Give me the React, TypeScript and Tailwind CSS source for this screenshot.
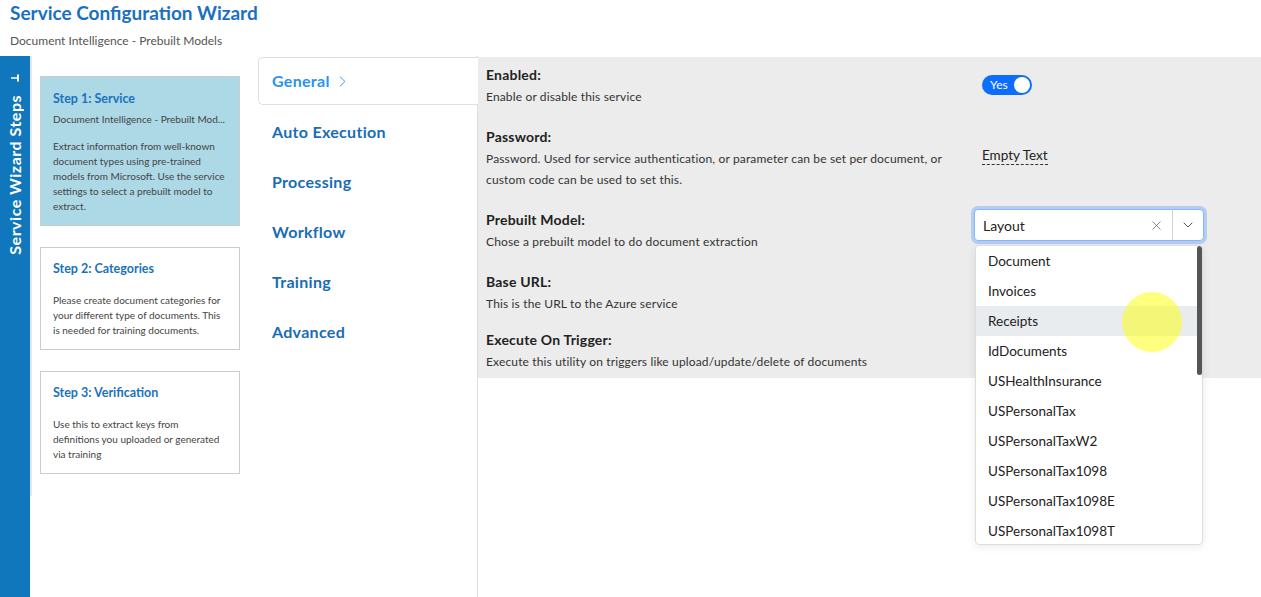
import React from "react";
import { ChevronRight, ChevronDown, X } from "lucide-react";

const steps = [
  {
    title: "Step 1: Service",
    subtitle: "Document Intelligence - Prebuilt Mod...",
    text: "Extract information from well-known document types using pre-trained models from Microsoft. Use the service settings to select a prebuilt model to extract.",
    active: true,
  },
  {
    title: "Step 2: Categories",
    text: "Please create document categories for your different type of documents. This is needed for training documents.",
  },
  {
    title: "Step 3: Verification",
    text: "Use this to extract keys from definitions you uploaded or generated via training",
  },
];

const tabs = ["General", "Auto Execution", "Processing", "Workflow", "Training", "Advanced"];

const models = [
  "Document",
  "Invoices",
  "Receipts",
  "IdDocuments",
  "USHealthInsurance",
  "USPersonalTax",
  "USPersonalTaxW2",
  "USPersonalTax1098",
  "USPersonalTax1098E",
  "USPersonalTax1098T",
];

function StepCard({ step }: { step: (typeof steps)[number] }) {
  return (
    <div
      className={`border border-[#cccccc] px-[12px] ${
        step.active ? "bg-[#add8e6] pt-[14px] pb-[11px]" : "bg-white pt-[13px] pb-[11px]"
      }`}
    >
      <div className="text-[12.5px] font-bold leading-[16px] text-[#1a72bf]">{step.title}</div>
      {step.subtitle && (
        <div className="mt-[4px] text-[10px] leading-[16px] text-[#444] whitespace-nowrap">{step.subtitle}</div>
      )}
      <p className={`${step.subtitle ? "mt-[12px]" : "mt-[16px]"} text-[10px] leading-[15px] text-[#444]`}>
        {step.text}
      </p>
    </div>
  );
}

function Row({
  label,
  desc,
  className,
  children,
}: {
  label: string;
  desc: string;
  className: string;
  children?: React.ReactNode;
}) {
  return (
    <div className={`flex ${className}`}>
      <div className="w-[488px] pr-[28px]">
        <div className="text-[14px] font-bold leading-[22px] tracking-[0.2px] text-[#222]">{label}</div>
        <div className="text-[12px] leading-[21px] tracking-[0.15px] text-[#333]">{desc}</div>
      </div>
      <div className="flex-1">{children}</div>
    </div>
  );
}

export default function App() {
  return (
    <div className="w-[1261px] h-[597px] overflow-hidden bg-white flex flex-col font-['Lato','Liberation_Sans',sans-serif]">
      <header className="h-[56px] shrink-0 pl-[10px] pt-[2px]">
        <h1 className="text-[19px] font-bold leading-[22px] text-[#1a70bf]">Service Configuration Wizard</h1>
        <p className="mt-[9px] text-[12px] leading-[16px] text-[#555]">Document Intelligence - Prebuilt Models</p>
      </header>

      <div className="flex flex-1 min-h-0">
        <aside className="w-[30px] shrink-0 bg-[#1077bd] flex flex-col items-center pt-[16px]">
          <svg width="12" height="12" viewBox="0 0 12 12" className="text-white">
            <path d="M2 6h7" stroke="currentColor" strokeWidth="1.5" />
            <path d="M9 2.5v7" stroke="currentColor" strokeWidth="2" />
          </svg>
          <div className="mt-[11px] [writing-mode:vertical-rl] rotate-180 text-[16px] font-bold tracking-[0.5px] text-white leading-[20px] whitespace-nowrap">
            Service Wizard Steps
          </div>
        </aside>

        <div className="w-[220px] shrink-0 flex">
          <div className="w-[2px] h-[440px] bg-[#e6e6e6]" />
          <div className="w-[200px] ml-[8px] pt-[20px] flex flex-col gap-[21px]">
            {steps.map((s) => (
              <StepCard key={s.title} step={s} />
            ))}
          </div>
        </div>

        <nav className="w-[228px] shrink-0 border-r border-[#dddddd] pl-[8px] pt-[1px]">
          {tabs.map((t, i) =>
            i === 0 ? (
              <div
                key={t}
                className="h-[48px] mb-[2px] -mr-px bg-white border border-r-0 border-[#dcdfe6] rounded-l-[5px] flex items-center pl-[13px] text-[16px] font-bold tracking-[0.3px] text-[#2b93ee]"
              >
                {t}
                <ChevronRight size={19} strokeWidth={1.2} className="ml-[3px]" />
              </div>
            ) : (
              <div
                key={t}
                className="h-[50px] flex items-center pl-[14px] text-[16px] font-bold tracking-[0.3px] text-[#1a6db5]"
              >
                {t}
              </div>
            )
          )}
        </nav>

        <main className="flex-1">
          <div className="mt-[1px] h-[321px] bg-[#ececec] pl-[8px] pt-[7px]">
            <Row label="Enabled:" desc="Enable or disable this service" className="mb-[19px]">
              <div className="mt-[11px] ml-[8px] w-[50px] h-[20px] rounded-full bg-[#0d6efd] flex items-center justify-between pl-[8px] pr-[2px]">
                <span className="text-[12px] text-white leading-none">Yes</span>
                <span className="w-[16px] h-[16px] rounded-full bg-white" />
              </div>
            </Row>
            <Row
              label="Password:"
              desc="Password. Used for service authentication, or parameter can be set per document, or custom code can be used to set this."
              className="mb-[19px]"
            >
              <span className="inline-block mt-[20px] ml-[8px] text-[13.5px] leading-[18px] text-[#222] border-b border-dashed border-[#333]">
                Empty Text
              </span>
            </Row>
            <Row
              label="Prebuilt Model:"
              desc="Chose a prebuilt model to do document extraction"
              className="mb-[19px] relative z-10"
            >
              <div className="relative w-[230px]">
                <div className="h-[32px] bg-white border border-[#86b7fe] rounded-[4px] shadow-[0_0_0_3px_rgba(13,110,253,0.25)] flex items-center">
                  <span className="flex-1 pl-[8px] text-[14px] text-[#222]">Layout</span>
                  <X size={15} strokeWidth={1.2} className="text-[#666] mr-[8px]" />
                  <div className="w-px h-full bg-[#cfd6e0]" />
                  <div className="w-[30px] flex justify-center">
                    <ChevronDown size={16} strokeWidth={1.5} className="text-[#555]" />
                  </div>
                </div>
                <div className="absolute left-[1px] top-[36px] w-[228px] h-[300px] bg-white border border-[#dddddd] rounded-[4px] shadow-[0_2px_8px_rgba(0,0,0,0.08)] overflow-hidden flex">
                  <ul className="w-[222px]">
                    {models.map((m) => (
                      <li
                        key={m}
                        className={`h-[30px] flex items-center pl-[12px] text-[13.5px] text-[#222] ${
                          m === "Receipts" ? "bg-[#e9ecef]" : ""
                        }`}
                      >
                        {m}
                      </li>
                    ))}
                  </ul>
                  <div className="w-[5px] h-[129px] rounded-full bg-[#555]" />
                  <div className="absolute left-[146px] top-[46px] w-[60px] h-[60px] rounded-full bg-[rgba(255,255,0,0.5)]" />
                </div>
              </div>
            </Row>
            <Row label="Base URL:" desc="This is the URL to the Azure service" className="mb-[15px]" />
            <Row label="Execute On Trigger:" desc="Execute this utility on triggers like upload/update/delete of documents" className="" />
          </div>
        </main>
      </div>
    </div>
  );
}
